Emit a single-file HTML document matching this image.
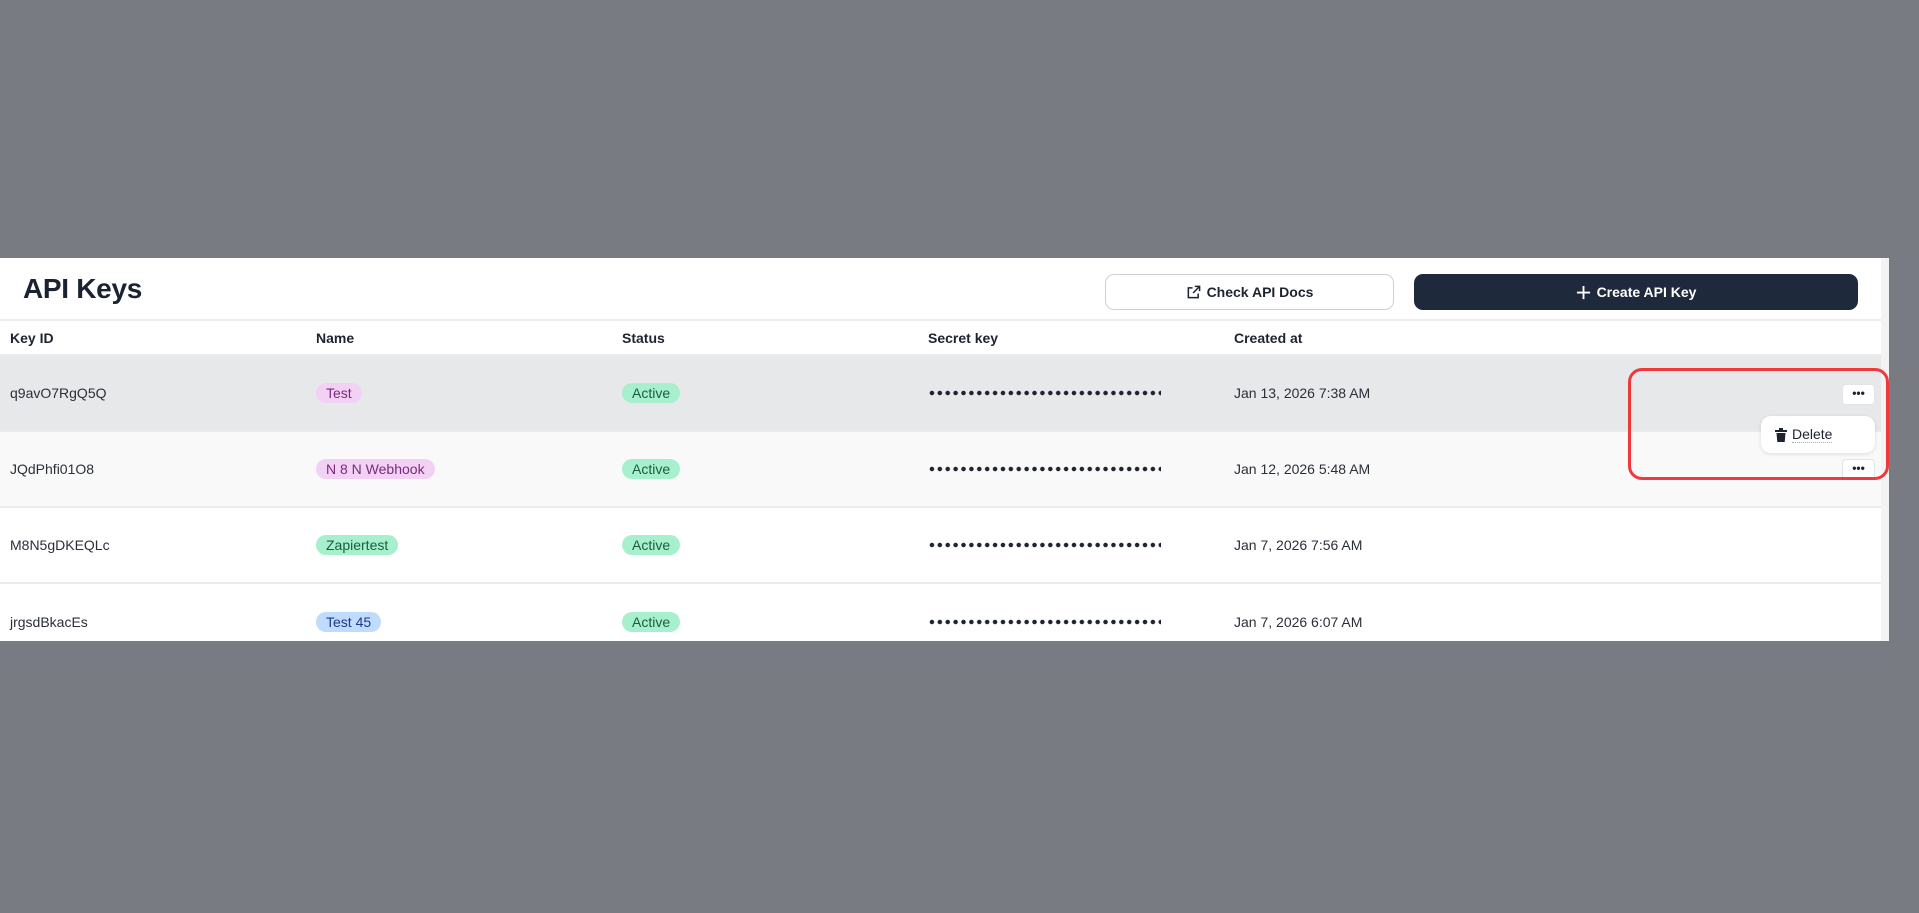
<!DOCTYPE html>
<html><head><meta charset="utf-8"><style>
*{margin:0;padding:0;box-sizing:border-box}
body{width:1919px;height:913px;background:#797b83;font-family:"Liberation Sans",sans-serif;position:relative;overflow:hidden;color:#1e2330}
.panel{position:absolute;left:0;top:258px;width:1889px;height:383px;background:#fff;overflow:hidden}
.sb{position:absolute;left:1881px;top:0;width:8px;height:383px;background:#f3f3f4}
h1{position:absolute;left:23px;top:273px;font-size:28px;font-weight:bold;color:#1b2231;letter-spacing:-0.3px}
.btn{position:absolute;top:274px;height:36px;border-radius:9px;display:flex;align-items:center;justify-content:center;font-size:14px;font-weight:bold;gap:6px}
.b1{left:1105px;width:289px;border:1px solid #cfd1d5;color:#1e2330;background:#fff}
.b2{left:1414px;width:444px;background:#1e293b;color:#fff}
.hdiv{position:absolute;left:0;top:319px;width:1881px;height:2px;background:#ececee}
.row{position:absolute;left:0;width:1881px;height:76px;border-bottom:2px solid #ebebec;font-size:14px;color:#2a2f3a}
.row span,.hdr span{position:absolute;top:50%;transform:translateY(-50%);white-space:nowrap}
.hdr{position:absolute;left:0;top:321px;width:1881px;height:35px;border-bottom:2px solid #ebebec;font-size:14px;font-weight:bold;color:#1e2330}
.c1{left:10px}.c2{left:316px}.c3{left:622px}.c4{left:928px}.c5{left:1234px}
.pill{padding:2px 10px;border-radius:10px;font-size:14px}
.pk{background:#f3d1f4;color:#7a2a7e}
.gr{background:#a7f0cd;color:#1c5c3e}
.bl{background:#bfdbfe;color:#1e3a8a}
.dots{width:233px;height:6px;background:radial-gradient(circle,#1e2330 2px,transparent 2.5px) 0 0/7.9px 6px repeat-x}
.more{position:absolute;left:1842px;width:33px;height:21px;background:#fff;border:1px solid #e3e4e6;border-radius:4px;font-size:12px;font-weight:bold;text-align:center;line-height:17px}
.pop{position:absolute;left:1761px;top:416px;width:114px;height:37px;background:#fff;border-radius:10px;box-shadow:0 1px 4px rgba(0,0,0,.12);font-size:14px;display:flex;align-items:center;padding-left:14px;gap:5px}
.red{position:absolute;left:1628px;top:368px;width:261px;height:112px;border:3px solid #ee3a3d;border-radius:14px}
</style></head><body>
<div class="panel"><div class="sb"></div></div>
<h1>API Keys</h1>
<div class="btn b1"><svg width="15" height="15" viewBox="0 0 16 16" fill="none" stroke="#1e2330" stroke-width="1.6"><path d="M7 3H2.5v10.5H13V9"/><path d="M9.5 1.5h5v5M14.5 1.5L7.5 8.5"/></svg>Check API Docs</div>
<div class="btn b2"><svg width="15" height="15" viewBox="0 0 16 16" stroke="#fff" stroke-width="2"><path d="M8 1v14M1 8h14"/></svg>Create API Key</div>
<div class="hdiv"></div>
<div class="hdr"><span class="c1">Key ID</span><span class="c2">Name</span><span class="c3">Status</span><span class="c4">Secret key</span><span class="c5">Created at</span></div>
<div class="row" style="top:356px;background:#e7e8ea"><span class="c1">q9avO7RgQ5Q</span><span class="c2 pill pk">Test</span><span class="c3 pill gr">Active</span><span class="c4 dots"></span><span class="c5">Jan 13, 2026 7:38 AM</span></div>
<div class="row" style="top:432px;background:#f9f9f9"><span class="c1">JQdPhfi01O8</span><span class="c2 pill pk">N 8 N Webhook</span><span class="c3 pill gr">Active</span><span class="c4 dots"></span><span class="c5">Jan 12, 2026 5:48 AM</span></div>
<div class="row" style="top:508px;background:#fff"><span class="c1">M8N5gDKEQLc</span><span class="c2 pill gr">Zapiertest</span><span class="c3 pill gr">Active</span><span class="c4 dots"></span><span class="c5">Jan 7, 2026 7:56 AM</span></div>
<div class="row" style="top:584px;height:57px;background:#fff;border:none;overflow:hidden"><div style="position:absolute;left:0;top:0;width:100%;height:76px"><span class="c1">jrgsdBkacEs</span><span class="c2 pill bl">Test 45</span><span class="c3 pill gr">Active</span><span class="c4 dots"></span><span class="c5">Jan 7, 2026 6:07 AM</span></div></div>
<div class="more" style="top:384px">•••</div>
<div class="more" style="top:459px">•••</div>
<div class="pop"><svg width="12" height="14" viewBox="0 0 12 14" fill="#1e2330"><rect x="0" y="2" width="12" height="2"/><rect x="4" y="0" width="4" height="2"/><path d="M1.5 5h9l-.8 9H2.3z"/></svg><span style="border-bottom:1px dotted #aaa">Delete</span></div>
<div class="red"></div>
</body></html>
